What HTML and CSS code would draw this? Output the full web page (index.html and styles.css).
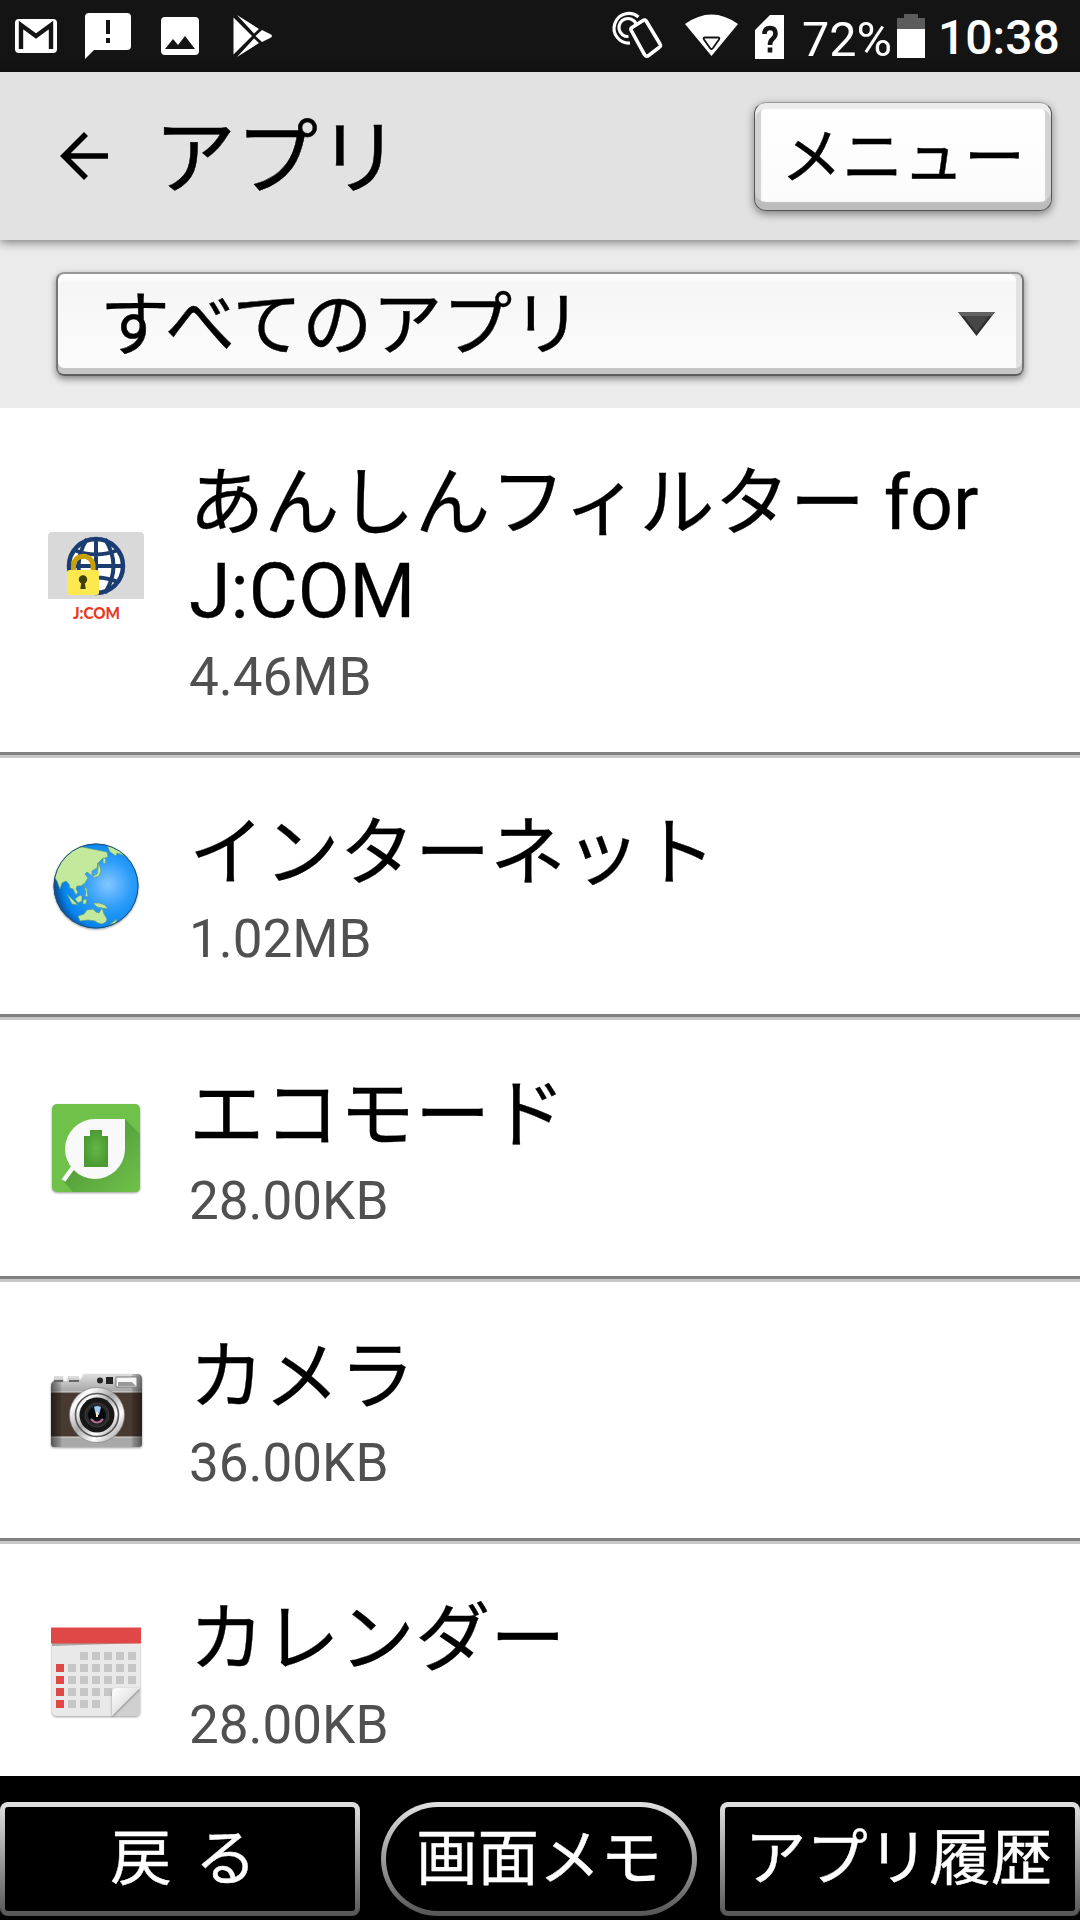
FILE: index.html
```
<!DOCTYPE html>
<html lang="ja">
<head>
    <meta charset="UTF-8">
    <meta name="viewport" content="width=device-width, initial-scale=1.0">
    <title>アプリ</title>
    <link rel="stylesheet" href="styles.css">
</head>
<body>
    <div class="screen">
        <div class="status-bar">
            <svg class="status-notifications" width="290" height="72" viewBox="0 0 290 72">
                <rect x="15" y="19" width="42" height="34" rx="4" fill="#fff"/>
                <path d="M21 49V25l15 11 15-11v24" fill="none" stroke="#141414" stroke-width="4.4"/>
                <path d="M89 13h38q4 0 4 4v29q0 4-4 4H94l-9 9V17q0-4 4-4z" fill="#fff"/>
                <path d="M106 20h4v14h-4zM106 38h4v5h-4z" fill="#141414"/>
                <rect x="161" y="17" width="38" height="38" rx="4" fill="#fff"/>
                <path d="M165 49l8-10 5 6 7-9 10 13z" fill="#141414"/>
                <path d="M233.500 17.500v37l18.500-18.500zM237 15l17 18.500 5-4.500zM237 57l17-18.500 5 4.500zM262 30l-6.500 6 6.500 6 9-4.500q2-1.500 0-3z" fill="#fff"/>
            </svg>
            <div class="status-system">
                <svg width="180" height="72" viewBox="608 0 180 72">
                    <g fill="none" stroke="#fff">
                        <path d="M638.500 17A14.800 14.800 0 1 0 630 43" stroke-width="3.200"/>
                        <path d="M636 23.500A9 9 0 1 0 628.500 36.500" stroke-width="3.200"/>
                        <path d="M632 27.500l11-7q2-1.500 3.500 1l13.500 22.500q1.500 2-1 3.500l-10.500 8q-2 2-4-1l-13-23.500q-1.500-2 .5-3.500z" fill="#141414" stroke-width="3.600"/>
                    </g>
                    <path d="M685 24q26.500-19 53 0l-26.500 32z" fill="#fff"/>
                    <path d="M705 37.500h13q2 0 1 2l-6 8.500q-1.500 2-3 0l-6-8.500q-1-2 1-2z" fill="#fff" stroke="#141414" stroke-width="1.800"/>
                    <path d="M770 15h14v44h-29V30z" fill="#fff"/>
                    <path d="M764.500 34q0-6 5.500-6t5.500 5.500q0 3-3 5.500-2.500 2-2.500 6M770 47.500v5" fill="none" stroke="#141414" stroke-width="4.600"/>
                </svg>
                <span class="battery-level">72%</span>
                <svg class="battery-icon" width="28" height="72" viewBox="0 0 28 72">
                    <path d="M7 14h14v4h7v40H0V18h7z" fill="#5c5c5c"/>
                    <path d="M0 29h28v29H0z" fill="#fff"/>
                </svg>
                <span class="clock">10:38</span>
            </div>
        </div>

        <header class="app-bar">
            <svg class="back-arrow" width="48" height="48" viewBox="0 0 48 48">
                <path d="M48 24H4M26 2L4 24l22 22" fill="none" stroke="#000" stroke-width="5.600"/>
            </svg>
            <h1>アプリ</h1>
            <button class="menu-button">メニュー</button>
        </header>

        <div class="filter-bar">
            <div class="filter-select">
                <span>すべてのアプリ</span>
                <svg width="37" height="24" viewBox="0 0 37 24">
                    <path d="M0 0h37L18.500 24z" fill="#303030"/>
                    <path d="M0 0h37l-4 4H4z" fill="#626262"/>
                    <path d="M6 4h25L18.500 20z" fill="#464646"/>
                </svg>
            </div>
        </div>

        <main class="app-list">
            <div class="app-item">
                <svg class="app-icon" viewBox="0 0 96 96">
                    <path d="M4 0h88q4 0 4 4v63H0V4q0-4 4-4z" fill="#d9d9d9"/>
                    <circle cx="48" cy="34" r="27" fill="#fff" stroke="#1b3d72" stroke-width="4.500"/>
                    <path d="M48 6v56M20 34h56M26 18q22 9 44 0M26 50q22-9 44 0M39 7q-17 27 0 54M57 7q17 27 0 54" fill="none" stroke="#1b3d72" stroke-width="4"/>
                    <path d="M25.500 42v-8a9.800 9.800 0 0 1 19.600 0v8" fill="none" stroke="#c9a000" stroke-width="5"/>
                    <rect x="19" y="38" width="32" height="25" rx="2.500" fill="#fce94f"/>
                    <circle cx="35" cy="47.500" r="4.200" fill="#404000"/>
                    <path d="M33.500 49h3l1.200 8h-5.400z" fill="#404000"/>
                    <text class="jcom-label" x="48.500" y="86.500" text-anchor="middle" textLength="47" lengthAdjust="spacingAndGlyphs">J:COM</text>
                </svg>
                <div class="app-info">
                    <div class="app-name">あんしんフィルター for J:COM</div>
                    <div class="app-size">4.46MB</div>
                </div>
            </div>

            <div class="app-item">
                <svg class="app-icon" viewBox="0 0 96 96">
                    <defs>
                        <radialGradient id="sea" cx=".64" cy=".48" r=".62">
                            <stop offset="0" stop-color="#84c6ff"/>
                            <stop offset=".45" stop-color="#2c9dfa"/>
                            <stop offset=".85" stop-color="#0583ee"/>
                            <stop offset="1" stop-color="#0a5199"/>
                        </radialGradient>
                        <clipPath id="globe"><circle cx="48" cy="48" r="42.500"/></clipPath>
                    </defs>
                    <circle class="icon-shadow" cx="48" cy="48" r="42.500" fill="url(#sea)"/>
                    <g clip-path="url(#globe)" fill="#c3e99c" stroke="#5a9c7c" stroke-width=".7">
                        <path d="M4 36L8 24 19 13 30 8 44 11 59 14 60 19 54 21 50 25 49 30 44 33 44 38 39 34 37 36 40 40 37 45 33 48 29 48 28 51 30 54 28 57 25 51 22 50 21 46 18 43 14 45 12 51 9 43z"/>
                        <path d="M58 5L70 8 77 18 69 15 68 18 62 14zM55 20L58 21 57 26 55 25zM50 25L52 29 53 33 51 38 45 40 45 38 49 36 50 31z"/>
                        <path d="M19 56L25 62 30 67 24 66zM27 61L32 57 34 58 34 63 30 65zM36 48L39 51 40 59 37 58 38 54zM35 62L39 61 38 66 35 66zM45 65L51 65 57 67 60 71 54 70 49 69z"/>
                        <path d="M30 78L36 76 39 72 45 71 48 74 51 75 54 70 56 76 59 81 58 84 54 86 50 85 47 83 40 82 32 83zM61 87L69 81 68 85z"/>
                    </g>
                    <circle cx="48" cy="48" r="42" fill="none" stroke="#234f77" stroke-width="1"/>
                </svg>
                <div class="app-info">
                    <div class="app-name">インターネット</div>
                    <div class="app-size">1.02MB</div>
                </div>
            </div>

            <div class="app-item">
                <svg class="app-icon" viewBox="0 0 96 96">
                    <defs>
                        <linearGradient id="leafShade" x1="0" y1="0" x2="1" y2="1">
                            <stop offset=".3" stop-color="#519b3a"/>
                            <stop offset="1" stop-color="#70c14a"/>
                        </linearGradient>
                        <radialGradient id="cell"><stop offset="0" stop-color="#67b646"/><stop offset="1" stop-color="#4b9b34"/></radialGradient>
                    </defs>
                    <rect class="icon-shadow" x="4" y="4" width="88" height="88" rx="5" fill="#70c14a"/>
                    <path d="M77 19l15 15v53q0 5-5 5H25l-10-11z" fill="url(#leafShade)"/>
                    <path d="M47 19h30v31a30 30 0 1 1-30-31z" fill="#f9f9f9"/>
                    <path d="M26 66L15.500 80.500" stroke="#f9f9f9" stroke-width="4.500"/>
                    <path d="M42 30h12v6h6v31H36V36h6z" fill="url(#cell)"/>
                </svg>
                <div class="app-info">
                    <div class="app-name">エコモード</div>
                    <div class="app-size">28.00KB</div>
                </div>
            </div>

            <div class="app-item">
                <svg class="app-icon" viewBox="0 -8 96 96">
                    <defs>
                        <linearGradient id="metal" x1="0" y1="0" x2="0" y2="1">
                            <stop offset="0" stop-color="#dedede"/><stop offset=".25" stop-color="#a4a4a4"/><stop offset="1" stop-color="#a9a9a9"/>
                        </linearGradient>
                        <linearGradient id="ring" x1="0" y1="0" x2="1" y2="1">
                            <stop offset="0" stop-color="#8c8c8c"/><stop offset=".2" stop-color="#fff"/><stop offset=".45" stop-color="#aaa"/><stop offset=".7" stop-color="#fff"/><stop offset="1" stop-color="#777"/>
                        </linearGradient>
                        <linearGradient id="edge">
                            <stop offset="0" stop-color="#000" stop-opacity=".5"/><stop offset=".1" stop-color="#000" stop-opacity=".15"/><stop offset=".12" stop-opacity="0"/><stop offset=".88" stop-opacity="0"/><stop offset=".9" stop-color="#000" stop-opacity=".15"/><stop offset="1" stop-color="#000" stop-opacity=".5"/>
                        </linearGradient>
                    </defs>
                    <path class="icon-shadow" d="M3 16q0-4 3-5V8h9v3h5V7h11v3h2l3-6h53q5 0 5 5v65q0 3-3 3H6q-3 0-3-3z" fill="url(#metal)"/>
                    <path d="M3 22h91v45H3z" fill="#493a31"/>
                    <path d="M3 22h91M3 67h91" stroke="#ddd" stroke-width="1"/>
                    <path d="M3 16q0-4 3-5h29l3-7h51q5 0 5 5v65q0 3-3 3H6q-3 0-3-3z" fill="url(#edge)"/>
                    <path d="M6 11h9M21 11h10" stroke="#666" stroke-width="2"/>
                    <path d="M6 7h9M20 7h11" stroke="#ddd" stroke-width="2"/>
                    <circle cx="52" cy="10.500" r="3" fill="#252525"/>
                    <path d="M58 7h7v7h-7z" fill="#222"/>
                    <path d="M68 7h21v10H68z" fill="#f8f8f8" stroke="#777"/>
                    <path d="M70 12h14l4 4H70z" fill="#999"/>
                    <circle cx="49" cy="45" r="27.500" fill="url(#ring)" stroke="#777" stroke-width=".6"/>
                    <circle cx="49" cy="45" r="21.500" fill="url(#ring)" stroke="#555" stroke-width="1.600"/>
                    <circle cx="49" cy="45" r="17.500" fill="#171717"/>
                    <circle cx="49" cy="45" r="12" fill="#292929" stroke="#3d3d3d"/>
                    <circle cx="49" cy="45" r="9" fill="#07090e"/>
                    <path d="M43 49q6 7 12 0" fill="none" stroke="#b47191" stroke-width="2"/>
                    <path d="M46 37q3-2 7 0l-2 8h-3z" fill="#9cc9ed"/>
                    <path d="M49 42v5" stroke="#f7e2bb" stroke-width="2"/>
                </svg>
                <div class="app-info">
                    <div class="app-name">カメラ</div>
                    <div class="app-size">36.00KB</div>
                </div>
            </div>

            <div class="app-item">
                <svg class="app-icon" viewBox="0 0 96 96">
                    <defs>
                        <linearGradient id="fold" x1="0" y1="0" x2=".6" y2=".6"><stop offset="0" stop-color="#fff"/><stop offset="1" stop-color="#e0e0e0"/></linearGradient>
                    </defs>
                    <path class="icon-shadow" d="M4 19h88v68q0 5-5 5H9q-5 0-5-5z" fill="#e9e9e9"/>
                    <path d="M4 19h88l-88 3z" fill="#a9a9a9"/>
                    <path d="M3 3.500h90v16H3z" fill="#e04747"/>
                    <g fill="none" stroke="#c6c6c6" stroke-width="8" stroke-dasharray="8 4">
                        <path d="M32 32h56"/>
                        <path d="M20 44h68"/>
                        <path d="M20 56h68"/>
                        <path d="M20 68h44"/>
                        <path d="M20 80h32"/>
                    </g>
                    <path d="M12 40v44" stroke="#e04747" stroke-width="8" stroke-dasharray="8 4"/>
                    <path d="M92 64v23q0 5-5 5H64z" fill="#d0d0d0"/>
                    <path class="icon-shadow" d="M92 64L64 92V69q0-5 5-5z" fill="url(#fold)"/>
                </svg>
                <div class="app-info">
                    <div class="app-name">カレンダー</div>
                    <div class="app-size">28.00KB</div>
                </div>
            </div>
        </main>

        <nav class="nav-bar">
            <button class="nav-button nav-back">戻 る</button>
            <button class="nav-button nav-pill">画面メモ</button>
            <button class="nav-button nav-history">アプリ履歴</button>
        </nav>
    </div>
</body>
</html>
```

FILE: styles.css
```
:root {
    --bar-dark: #141414;
    --header-bg: #e2e2e2;
    --filter-bg: #ebebeb;
    --text-muted: #505050;
}

* {
    margin: 0;
    padding: 0;
    box-sizing: border-box;
}

body {
    font-family: Roboto, 'Noto Sans CJK JP', sans-serif;
    color: #000;
    background-color: #fff;
}

.screen {
    display: flex;
    flex-direction: column;
    width: 1080px;
    height: 1920px;
    overflow: hidden;
}

svg {
    display: block;
    flex: none;
}

button {
    font-family: inherit;
    white-space: nowrap;
}

/* Status bar */
.status-bar {
    display: flex;
    justify-content: space-between;
    flex: none;
    height: 72px;
    background-color: var(--bar-dark);
    color: #fff;
}

.status-system {
    display: flex;
    padding-right: 22px;
    line-height: 72px;
}

.battery-level {
    width: 95px;
    margin-left: 14px;
    font-size: 48.5px;
    padding-top: 4px;
}

.clock {
    width: 120px;
    margin-left: 13px;
    padding-top: 2px;
    font-size: 48px;
    font-weight: 500;
}

/* Header */
.app-bar {
    display: flex;
    align-items: center;
    flex: none;
    height: 168px;
    padding: 0 28px 0 60px;
    background-color: var(--header-bg);
    box-shadow: 0 2px 10px rgba(0, 0, 0, 0.5);
    z-index: 1;
}

h1 {
    margin-left: 46px;
    padding-top: 5px;
    font-size: 82px;
    font-weight: 400;
    line-height: 96px;
    -webkit-text-stroke: 0.5px;
}

.menu-button {
    width: 298px;
    height: 109px;
    margin-left: auto;
    padding-bottom: 7px;
    border: 1px solid #555;
    border-top-color: #999;
    border-radius: 12px;
    background: linear-gradient(#fff, #fbfbfb);
    box-shadow: inset 0 -8px 1px #bcbcbc, inset 0 6px 1px #ececec, inset 6px 0 1px #d2d2d2, inset -6px 0 1px #d2d2d2, 0 3px 8px rgba(0, 0, 0, 0.45);
    font-size: 61px;
    color: #000;
    -webkit-text-stroke: 0.4px;
}

/* Filter */
.filter-bar {
    flex: none;
    height: 168px;
    padding: 32px 56px 0 56px;
    background-color: var(--filter-bg);
}

.filter-select {
    display: flex;
    align-items: center;
    justify-content: space-between;
    height: 104px;
    padding: 0 27px 0 42px;
    border: 2px solid #777;
    border-top-color: #999;
    border-bottom-color: #5e5e5e;
    border-radius: 8px;
    background: linear-gradient(#f5f5f5, #fcfcfc);
    box-shadow: inset 0 -6px 0 #c6c6c6, inset -6px 0 0 #e2e2e2, inset 0 6px 3px #fff, 0 3px 7px rgba(0, 0, 0, 0.45);
    font-size: 70px;
    line-height: 80px;
}

.filter-select span {
    padding-top: 3px;
    -webkit-text-stroke: 0.4px;
}

/* App list */
.app-list {
    flex: 1;
    min-height: 0;
    overflow: hidden;
}

.app-item {
    display: flex;
    align-items: center;
    padding: 51px 89px 45px 48px;
    border-bottom: 3px solid #c8c8c8;
    box-shadow: inset 0 -3px 0 #808080;
}

.app-icon {
    width: 96px;
    height: 96px;
    margin: 0 45px 9px 0;
    overflow: visible;
}

.icon-shadow {
    filter: drop-shadow(0 1px 1px rgba(0, 0, 0, 0.4));
}

.jcom-label {
    font-family: Lato, sans-serif;
    font-size: 17px;
    font-weight: 900;
    fill: #e8381b;
}

.app-info {
    flex: 1;
}

.app-name {
    font-size: 75.3px;
    line-height: 88px;
    -webkit-text-stroke: 0.3px;
}

.app-size {
    margin-top: 10px;
    font-size: 53px;
    line-height: 65px;
    color: var(--text-muted);
}

/* Navigation */
.nav-bar {
    display: flex;
    justify-content: space-between;
    flex: none;
    height: 144px;
    padding-top: 26px;
    background-color: #000;
}

.nav-button {
    width: 360px;
    height: 114px;
    border: 5px solid transparent;
    border-radius: 8px;
    background: linear-gradient(#000, #000) padding-box, linear-gradient(#e2e2e2, #555) border-box;
    color: #fff;
    font-size: 61.5px;
    line-height: 100px;
    -webkit-text-stroke: 0.4px;
}

.nav-back {
    padding-left: 7px;
    word-spacing: 8px;
}

.nav-pill {
    width: 316px;
    margin-right: 2px;
    border-radius: 57px;
}

.nav-history {
    padding-right: 3px;
}
```
